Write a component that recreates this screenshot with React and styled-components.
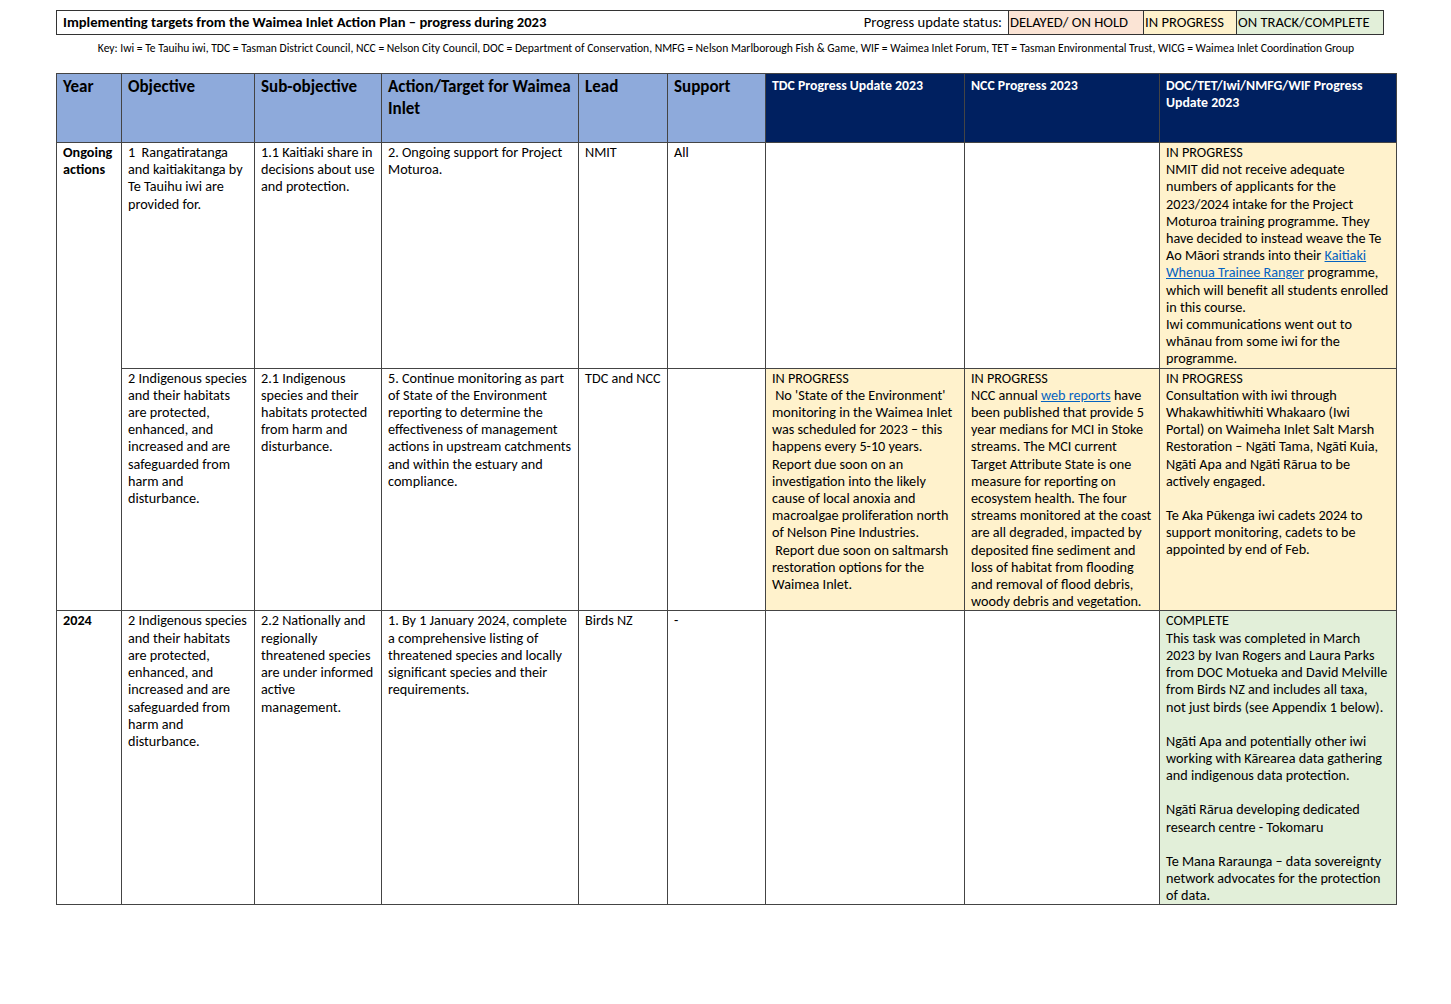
import React from "react";
import styled, { createGlobalStyle } from "styled-components";

const Global = createGlobalStyle`
  body { margin: 0; background: #fff; font-family: Carlito, Lato, "Liberation Sans", sans-serif; color: #000; }
`;
const Page = styled.div`padding: 10px 0 0 56px; width: 1340px;`;
const TitleBar = styled.div`
  display: flex; align-items: stretch; width: 1328px; height: 25px; border: 1.5px solid #333; box-sizing: border-box;
`;
const Title = styled.div`flex: 1; font-weight: bold; font-size: 14.6px; padding: 3px 6px; line-height: 17px;`;
const StatusLabel = styled.div`font-size: 14.6px; padding: 3px 6px; line-height: 17px;`;
const Status = styled.div`
  font-size: 14.6px; line-height: 17px; padding: 3px 1px; background: ${p => p.$bg}; border-left: 1px solid #333;
  width: ${p => p.$w}px; white-space: nowrap;
`;
const Key = styled.div`font-size: 11.6px; text-align: center; margin: 6px 0 0; width: 1340px; height: 32px;`;
const Table = styled.table`
  border-collapse: collapse; table-layout: fixed; width: 1340px; font-size: 14.2px; line-height: 17.2px;
`;
const Th = styled.th`
  background: ${p => (p.$dark ? "#002060" : "#8eaadb")}; color: ${p => (p.$dark ? "#fff" : "#000")};
  font-size: ${p => (p.$dark ? "13.8px" : "17px")}; line-height: ${p => (p.$dark ? "17px" : "22px")};
  text-align: left; vertical-align: top; font-weight: bold; padding: ${p => (p.$dark ? "3px 6px" : "2px 6px")};
  border: 1px solid #444; height: 62px;
`;
const Td = styled.td`
  vertical-align: top; padding: 1px 6px 0; border: 1px solid #444; background: ${p => p.$bg || "#fff"};
  font-weight: ${p => (p.$bold ? "bold" : "normal")}; height: ${p => p.$h}px; box-sizing: border-box;
`;
const Link = styled.span`color: #0563c1; text-decoration: underline;`;
const Gap = styled.div`height: 17px;`;

const Y = "#fff2cc", G = "#e2efd9";

export default function App() {
  return (
    <Page>
      <Global />
      <TitleBar>
        <Title>Implementing targets from the Waimea Inlet Action Plan – progress during 2023</Title>
        <StatusLabel>Progress update status:</StatusLabel>
        <Status $bg="#fbe4d5" $w={132}>DELAYED/ ON HOLD</Status>
        <Status $bg={Y} $w={90}>IN PROGRESS</Status>
        <Status $bg={G} $w={144}>ON TRACK/COMPLETE</Status>
      </TitleBar>
      <Key>Key: Iwi = Te Tauihu iwi, TDC = Tasman District Council, NCC = Nelson City Council, DOC = Department of Conservation, NMFG = Nelson Marlborough Fish &amp; Game, WIF = Waimea Inlet Forum, TET = Tasman Environmental Trust, WICG = Waimea Inlet Coordination Group</Key>
      <Table>
        <colgroup>
          <col style={{ width: 65 }} /><col style={{ width: 133 }} /><col style={{ width: 127 }} /><col style={{ width: 197 }} />
          <col style={{ width: 89 }} /><col style={{ width: 98 }} /><col style={{ width: 199 }} /><col style={{ width: 195 }} /><col style={{ width: 237 }} />
        </colgroup>
        <thead>
          <tr>
            <Th>Year</Th><Th>Objective</Th><Th>Sub-objective</Th><Th>Action/Target for Waimea Inlet</Th><Th>Lead</Th><Th>Support</Th>
            <Th $dark>TDC Progress Update 2023</Th><Th $dark>NCC Progress 2023</Th><Th $dark>DOC/TET/Iwi/NMFG/WIF Progress Update 2023</Th>
          </tr>
        </thead>
        <tbody>
          <tr>
            <Td $bold rowSpan={2}>Ongoing actions</Td>
            <Td $h={224}>1&nbsp; Rangatiratanga and kaitiakitanga by Te Tauihu iwi are provided for.</Td>
            <Td>1.1 Kaitiaki share in decisions about use and protection.</Td>
            <Td>2. Ongoing support for Project Moturoa.</Td>
            <Td>NMIT</Td><Td>All</Td><Td /><Td />
            <Td $bg={Y}>IN PROGRESS<br />NMIT did not receive adequate numbers of applicants for the 2023/2024 intake for the Project Moturoa training programme. They have decided to instead weave the Te Ao Māori strands into their <Link>Kaitiaki Whenua Trainee Ranger</Link> programme, which will benefit all students enrolled in this course.<br />Iwi communications went out to whānau from some iwi for the programme.</Td>
          </tr>
          <tr>
            <Td $h={241}>2 Indigenous species and their habitats are protected, enhanced, and increased and are safeguarded from harm and disturbance.</Td>
            <Td>2.1 Indigenous species and their habitats protected from harm and disturbance.</Td>
            <Td>5. Continue monitoring as part of State of the Environment reporting to determine the effectiveness of management actions in upstream catchments and within the estuary and compliance.</Td>
            <Td>TDC and NCC</Td><Td />
            <Td $bg={Y}>IN PROGRESS<br />&nbsp;No 'State of the Environment' monitoring in the Waimea Inlet was scheduled for 2023 – this happens every 5-10 years. Report due soon on an investigation into the likely cause of local anoxia and macroalgae proliferation north of Nelson Pine Industries.<br />&nbsp;Report due soon on saltmarsh restoration options for the Waimea Inlet.</Td>
            <Td $bg={Y}>IN PROGRESS<br />NCC annual <Link>web reports</Link> have been published that provide 5 year medians for MCI in Stoke streams. The MCI current Target Attribute State is one measure for reporting on ecosystem health. The four streams monitored at the coast are all degraded, impacted by deposited fine sediment and loss of habitat from flooding and removal of flood debris, woody debris and vegetation.</Td>
            <Td $bg={Y}>IN PROGRESS<br />Consultation with iwi through Whakawhitiwhiti Whakaaro (Iwi Portal) on Waimeha Inlet Salt Marsh Restoration – Ngāti Tama, Ngāti Kuia, Ngāti Apa and Ngāti Rārua to be actively engaged.<Gap />Te Aka Pūkenga iwi cadets 2024 to support monitoring, cadets to be appointed by end of Feb.</Td>
          </tr>
          <tr>
            <Td $bold $h={293}>2024</Td>
            <Td>2 Indigenous species and their habitats are protected, enhanced, and increased and are safeguarded from harm and disturbance.</Td>
            <Td>2.2 Nationally and regionally threatened species are under informed active management.</Td>
            <Td>1. By 1 January 2024, complete a comprehensive listing of threatened species and locally significant species and their requirements.</Td>
            <Td>Birds NZ</Td><Td>-</Td><Td /><Td />
            <Td $bg={G}>COMPLETE<br />This task was completed in March 2023 by Ivan Rogers and Laura Parks from DOC Motueka and David Melville from Birds NZ and includes all taxa, not just birds (see Appendix 1 below).<Gap />Ngāti Apa and potentially other iwi working with Kārearea data gathering and indigenous data protection.<Gap />Ngāti Rārua developing dedicated research centre - Tokomaru<Gap />Te Mana Raraunga – data sovereignty network advocates for the protection of data.</Td>
          </tr>
        </tbody>
      </Table>
    </Page>
  );
}
